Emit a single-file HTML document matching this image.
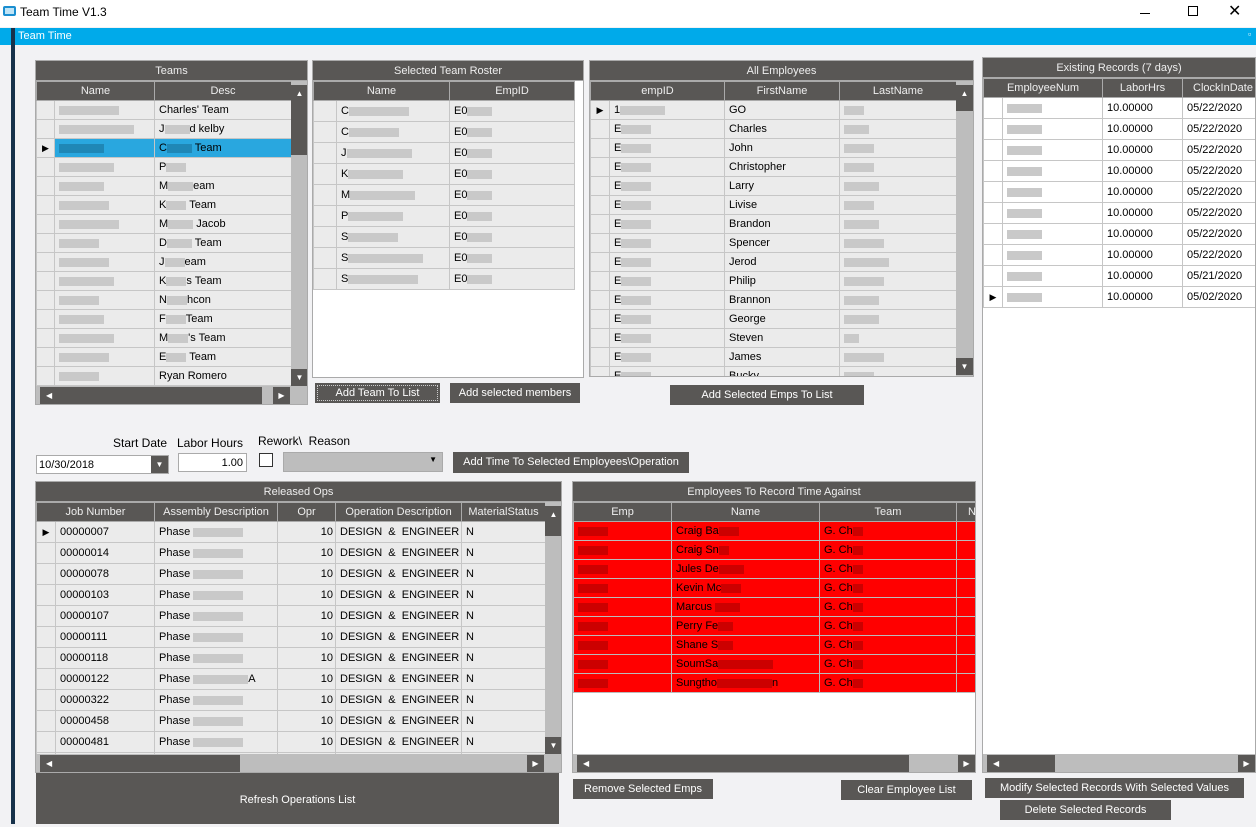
<!DOCTYPE html>
<html><head><meta charset="utf-8"><style>
*{box-sizing:border-box;margin:0;padding:0}
body{width:1256px;height:824px;overflow:hidden;background:#f2f2f4;font-family:"Liberation Sans",sans-serif;font-size:11px;color:#000;position:relative}
.a{position:absolute}
.tb{left:0;top:0;width:1256px;height:27px;background:#fff}
.blue{left:0;top:28px;width:1256px;height:17px;background:#00aaea;color:#fff;font-size:11px}
.panel{position:absolute;border:1px solid #aaa;background:#fff;overflow:hidden}
.ph{position:absolute;left:0;right:0;top:0;height:20px;background:#595755;color:#eee;text-align:center;line-height:20px;border-bottom:1px solid #aaa}
table{position:absolute;border-collapse:collapse;table-layout:fixed}
th{background:#595755;color:#eee;font-weight:normal;height:19px;border:1px solid #aaa;font-size:11px}
td{background:#ebebeb;border:1px solid #c6c6c6;white-space:nowrap;overflow:hidden;padding-left:4px;font-size:11px}
td.rh{padding:0;font-size:9px;text-align:center}
.w td{background:#fff}
.r td{background:#f00;border-color:#bbb}
.sel td{background:#29a7df}
i{display:inline-block;height:9px;background:#c9c9c9;vertical-align:middle}
.r i{background:#c00}
.vs{position:absolute;background:#bdbdbd}
.dk{position:absolute;background:#595755;color:#fff;text-align:center}
.btn{position:absolute;background:#595755;color:#fff;text-align:center;font-size:11px}
</style></head><body>
<div class="a tb"><div class="a" style="left:3px;top:6px;width:13px;height:10px;border:2px solid #1a8ed0;border-radius:2px;background:#bfe4f6"></div><div class="a" style="left:20px;top:5px;font-size:12px">Team Time V1.3</div>
<div class="a" style="left:1140px;top:13px;width:10px;height:1px;background:#000"></div>
<div class="a" style="left:1188px;top:6px;width:10px;height:10px;border:1px solid #000"></div>
<div class="a" style="left:1228px;top:1px;font-size:16px">✕</div></div>
<div class="a blue"><span class="a" style="left:18px;top:2px">Team Time</span><span class="a" style="left:1248px;top:1px;font-size:9px">▫</span></div>
<div class="a" style="left:11px;top:28px;width:4px;height:796px;background:#17324a"></div>

<!-- Teams -->
<div class="panel" style="left:35px;top:60px;width:273px;height:345px;background:#ebebeb">
<div class="ph">Teams</div>
<table style="left:0;top:20px;width:255px">
<colgroup><col style="width:18px"><col style="width:100px"><col style="width:137px"></colgroup>
<tr><th colspan="2">Name</th><th>Desc</th></tr>
<tr style="height:19px"><td class="rh"></td><td><i style="width:60px"></i></td><td>Charles' Team</td></tr>
<tr style="height:19px"><td class="rh"></td><td><i style="width:75px"></i></td><td>J<i style="width:25px"></i>d kelby</td></tr>
<tr class="sel" style="height:19px"><td class="rh" style="background:#ebebeb">▶</td><td><i style="width:45px;background:#1f87b6"></i></td><td>C<i style="width:25px;background:#1f87b6"></i> Team</td></tr>
<tr style="height:19px"><td class="rh"></td><td><i style="width:55px"></i></td><td>P<i style="width:20px"></i></td></tr>
<tr style="height:19px"><td class="rh"></td><td><i style="width:45px"></i></td><td>M<i style="width:25px"></i>eam</td></tr>
<tr style="height:19px"><td class="rh"></td><td><i style="width:50px"></i></td><td>K<i style="width:20px"></i> Team</td></tr>
<tr style="height:19px"><td class="rh"></td><td><i style="width:60px"></i></td><td>M<i style="width:25px"></i> Jacob</td></tr>
<tr style="height:19px"><td class="rh"></td><td><i style="width:40px"></i></td><td>D<i style="width:25px"></i> Team</td></tr>
<tr style="height:19px"><td class="rh"></td><td><i style="width:50px"></i></td><td>J<i style="width:20px"></i>eam</td></tr>
<tr style="height:19px"><td class="rh"></td><td><i style="width:55px"></i></td><td>K<i style="width:20px"></i>s Team</td></tr>
<tr style="height:19px"><td class="rh"></td><td><i style="width:40px"></i></td><td>N<i style="width:20px"></i>hcon</td></tr>
<tr style="height:19px"><td class="rh"></td><td><i style="width:45px"></i></td><td>F<i style="width:20px"></i>Team</td></tr>
<tr style="height:19px"><td class="rh"></td><td><i style="width:55px"></i></td><td>M<i style="width:20px"></i>'s Team</td></tr>
<tr style="height:19px"><td class="rh"></td><td><i style="width:50px"></i></td><td>E<i style="width:20px"></i> Team</td></tr>
<tr style="height:19px"><td class="rh"></td><td><i style="width:40px"></i></td><td>Ryan Romero</td></tr>
</table>
<div class="vs" style="left:255px;top:20px;width:17px;height:305px"></div>
<div class="dk" style="left:255px;top:24px;width:17px;height:70px;font-size:8px;line-height:18px">▲</div>
<div class="dk" style="left:255px;top:308px;width:17px;height:17px;font-size:8px;line-height:17px">▼</div>
<div class="vs" style="left:0;top:325px;width:272px;height:19px"></div>
<div class="dk" style="left:4px;top:326px;width:222px;height:17px;text-align:left;padding-left:6px;font-size:8px;line-height:17px">◀</div>
<div class="dk" style="left:237px;top:326px;width:17px;height:17px;font-size:8px;line-height:17px">▶</div>
</div>

<!-- Roster -->
<div class="panel" style="left:312px;top:60px;width:272px;height:318px">
<div class="ph">Selected Team Roster</div>
<table style="left:0;top:20px;width:261px">
<colgroup><col style="width:23px"><col style="width:113px"><col style="width:125px"></colgroup>
<tr><th colspan="2">Name</th><th>EmpID</th></tr>
<tr style="height:21px"><td class="rh"></td><td>C<i style="width:60px"></i></td><td>E0<i style="width:25px"></i></td></tr>
<tr style="height:21px"><td class="rh"></td><td>C<i style="width:50px"></i></td><td>E0<i style="width:25px"></i></td></tr>
<tr style="height:21px"><td class="rh"></td><td>J<i style="width:65px"></i></td><td>E0<i style="width:25px"></i></td></tr>
<tr style="height:21px"><td class="rh"></td><td>K<i style="width:55px"></i></td><td>E0<i style="width:25px"></i></td></tr>
<tr style="height:21px"><td class="rh"></td><td>M<i style="width:65px"></i></td><td>E0<i style="width:25px"></i></td></tr>
<tr style="height:21px"><td class="rh"></td><td>P<i style="width:55px"></i></td><td>E0<i style="width:25px"></i></td></tr>
<tr style="height:21px"><td class="rh"></td><td>S<i style="width:50px"></i></td><td>E0<i style="width:25px"></i></td></tr>
<tr style="height:21px"><td class="rh"></td><td>S<i style="width:75px"></i></td><td>E0<i style="width:25px"></i></td></tr>
<tr style="height:21px"><td class="rh"></td><td>S<i style="width:70px"></i></td><td>E0<i style="width:25px"></i></td></tr>
</table>
</div>

<!-- All Employees -->
<div class="panel" style="left:589px;top:60px;width:385px;height:317px;background:#ebebeb">
<div class="ph">All Employees</div>
<table style="left:0;top:20px;width:366px">
<colgroup><col style="width:19px"><col style="width:115px"><col style="width:115px"><col style="width:117px"></colgroup>
<tr><th colspan="2">empID</th><th>FirstName</th><th>LastName</th></tr>
<tr style="height:19px"><td class="rh">▶</td><td>1<i style="width:45px"></i></td><td>GO</td><td><i style="width:20px"></i></td></tr>
<tr style="height:19px"><td class="rh"></td><td>E<i style="width:30px"></i></td><td>Charles</td><td><i style="width:25px"></i></td></tr>
<tr style="height:19px"><td class="rh"></td><td>E<i style="width:30px"></i></td><td>John</td><td><i style="width:30px"></i></td></tr>
<tr style="height:19px"><td class="rh"></td><td>E<i style="width:30px"></i></td><td>Christopher</td><td><i style="width:30px"></i></td></tr>
<tr style="height:19px"><td class="rh"></td><td>E<i style="width:30px"></i></td><td>Larry</td><td><i style="width:35px"></i></td></tr>
<tr style="height:19px"><td class="rh"></td><td>E<i style="width:30px"></i></td><td>Livise</td><td><i style="width:30px"></i></td></tr>
<tr style="height:19px"><td class="rh"></td><td>E<i style="width:30px"></i></td><td>Brandon</td><td><i style="width:35px"></i></td></tr>
<tr style="height:19px"><td class="rh"></td><td>E<i style="width:30px"></i></td><td>Spencer</td><td><i style="width:40px"></i></td></tr>
<tr style="height:19px"><td class="rh"></td><td>E<i style="width:30px"></i></td><td>Jerod</td><td><i style="width:45px"></i></td></tr>
<tr style="height:19px"><td class="rh"></td><td>E<i style="width:30px"></i></td><td>Philip</td><td><i style="width:40px"></i></td></tr>
<tr style="height:19px"><td class="rh"></td><td>E<i style="width:30px"></i></td><td>Brannon</td><td><i style="width:35px"></i></td></tr>
<tr style="height:19px"><td class="rh"></td><td>E<i style="width:30px"></i></td><td>George</td><td><i style="width:35px"></i></td></tr>
<tr style="height:19px"><td class="rh"></td><td>E<i style="width:30px"></i></td><td>Steven</td><td><i style="width:15px"></i></td></tr>
<tr style="height:19px"><td class="rh"></td><td>E<i style="width:30px"></i></td><td>James</td><td><i style="width:40px"></i></td></tr>
<tr style="height:19px"><td class="rh"></td><td>E<i style="width:30px"></i></td><td>Bucky</td><td><i style="width:30px"></i></td></tr>
</table>
<div class="vs" style="left:366px;top:20px;width:17px;height:296px"></div>
<div class="dk" style="left:366px;top:24px;width:17px;height:26px;font-size:8px;line-height:18px">▲</div>
<div class="dk" style="left:366px;top:297px;width:17px;height:17px;font-size:8px;line-height:17px">▼</div>
</div>

<!-- Existing Records -->
<div class="panel" style="left:982px;top:57px;width:274px;height:716px">
<div class="ph">Existing Records (7 days)</div>
<table class="w" style="left:0;top:20px;width:280px">
<colgroup><col style="width:19px"><col style="width:100px"><col style="width:80px"><col style="width:81px"></colgroup>
<tr><th colspan="2">EmployeeNum</th><th>LaborHrs</th><th>ClockInDate</th></tr>
<tr style="height:21px"><td class="rh"></td><td><i style="width:35px"></i></td><td>10.00000</td><td>05/22/2020</td></tr>
<tr style="height:21px"><td class="rh"></td><td><i style="width:35px"></i></td><td>10.00000</td><td>05/22/2020</td></tr>
<tr style="height:21px"><td class="rh"></td><td><i style="width:35px"></i></td><td>10.00000</td><td>05/22/2020</td></tr>
<tr style="height:21px"><td class="rh"></td><td><i style="width:35px"></i></td><td>10.00000</td><td>05/22/2020</td></tr>
<tr style="height:21px"><td class="rh"></td><td><i style="width:35px"></i></td><td>10.00000</td><td>05/22/2020</td></tr>
<tr style="height:21px"><td class="rh"></td><td><i style="width:35px"></i></td><td>10.00000</td><td>05/22/2020</td></tr>
<tr style="height:21px"><td class="rh"></td><td><i style="width:35px"></i></td><td>10.00000</td><td>05/22/2020</td></tr>
<tr style="height:21px"><td class="rh"></td><td><i style="width:35px"></i></td><td>10.00000</td><td>05/22/2020</td></tr>
<tr style="height:21px"><td class="rh"></td><td><i style="width:35px"></i></td><td>10.00000</td><td>05/21/2020</td></tr>
<tr style="height:21px"><td class="rh">▶</td><td><i style="width:35px"></i></td><td>10.00000</td><td>05/02/2020</td></tr>
</table>
<div class="vs" style="left:0;top:696px;width:274px;height:19px"></div>
<div class="dk" style="left:4px;top:697px;width:68px;height:17px;text-align:left;padding-left:6px;font-size:8px;line-height:17px">◀</div>
<div class="dk" style="left:255px;top:697px;width:17px;height:17px;font-size:8px;line-height:17px">▶</div>
</div>

<div class="btn" style="left:315px;top:383px;width:125px;height:20px;line-height:20px;outline:1px dotted #ccc;outline-offset:-3px">Add Team To List</div>
<div class="btn" style="left:450px;top:383px;width:130px;height:20px;line-height:20px">Add selected members</div>
<div class="btn" style="left:670px;top:385px;width:194px;height:20px;line-height:20px">Add Selected Emps To List</div>

<div class="a" style="left:113px;top:436px;font-size:12px">Start Date</div>
<div class="a" style="left:177px;top:436px;font-size:12px">Labor Hours</div>
<div class="a" style="left:258px;top:434px;font-size:12px">Rework\ &nbsp;Reason</div>
<div class="a" style="left:36px;top:455px;width:133px;height:19px;background:#fff;border:1px solid #aaa;padding:3px 2px;font-size:11px">10/30/2018</div>
<div class="dk" style="left:151px;top:456px;width:17px;height:17px;font-size:8px;line-height:17px">▼</div>
<div class="a" style="left:178px;top:453px;width:69px;height:19px;background:#fff;border:1px solid #aaa;text-align:right;padding:3px 3px;font-size:11px">1.00</div>
<div class="a" style="left:259px;top:453px;width:14px;height:14px;border:1px solid #333;background:#fff"></div>
<div class="a" style="left:283px;top:452px;width:160px;height:20px;background:#bdbdbd;border:1px solid #aaa;text-align:right;padding:2px 5px;font-size:8px">▼</div>
<div class="btn" style="left:453px;top:452px;width:236px;height:21px;line-height:21px">Add Time To Selected Employees\Operation</div>

<!-- Released Ops -->
<div class="panel" style="left:35px;top:481px;width:527px;height:292px;background:#ebebeb">
<div class="ph">Released Ops</div>
<table style="left:0;top:20px;width:509px">
<colgroup><col style="width:19px"><col style="width:99px"><col style="width:123px"><col style="width:58px"><col style="width:126px"><col style="width:84px"></colgroup>
<tr><th colspan="2">Job Number</th><th>Assembly Description</th><th>Opr</th><th>Operation Description</th><th>MaterialStatus</th></tr>
<tr style="height:21px"><td class="rh">▶</td><td>00000007</td><td>Phase <i style="width:50px"></i></td><td style="text-align:right;padding-right:2px">10</td><td>DESIGN &nbsp;&amp; &nbsp;ENGINEER</td><td>N</td></tr>
<tr style="height:21px"><td class="rh"></td><td>00000014</td><td>Phase <i style="width:50px"></i></td><td style="text-align:right;padding-right:2px">10</td><td>DESIGN &nbsp;&amp; &nbsp;ENGINEER</td><td>N</td></tr>
<tr style="height:21px"><td class="rh"></td><td>00000078</td><td>Phase <i style="width:50px"></i></td><td style="text-align:right;padding-right:2px">10</td><td>DESIGN &nbsp;&amp; &nbsp;ENGINEER</td><td>N</td></tr>
<tr style="height:21px"><td class="rh"></td><td>00000103</td><td>Phase <i style="width:50px"></i></td><td style="text-align:right;padding-right:2px">10</td><td>DESIGN &nbsp;&amp; &nbsp;ENGINEER</td><td>N</td></tr>
<tr style="height:21px"><td class="rh"></td><td>00000107</td><td>Phase <i style="width:50px"></i></td><td style="text-align:right;padding-right:2px">10</td><td>DESIGN &nbsp;&amp; &nbsp;ENGINEER</td><td>N</td></tr>
<tr style="height:21px"><td class="rh"></td><td>00000111</td><td>Phase <i style="width:50px"></i></td><td style="text-align:right;padding-right:2px">10</td><td>DESIGN &nbsp;&amp; &nbsp;ENGINEER</td><td>N</td></tr>
<tr style="height:21px"><td class="rh"></td><td>00000118</td><td>Phase <i style="width:50px"></i></td><td style="text-align:right;padding-right:2px">10</td><td>DESIGN &nbsp;&amp; &nbsp;ENGINEER</td><td>N</td></tr>
<tr style="height:21px"><td class="rh"></td><td>00000122</td><td>Phase <i style="width:55px"></i>A</td><td style="text-align:right;padding-right:2px">10</td><td>DESIGN &nbsp;&amp; &nbsp;ENGINEER</td><td>N</td></tr>
<tr style="height:21px"><td class="rh"></td><td>00000322</td><td>Phase <i style="width:50px"></i></td><td style="text-align:right;padding-right:2px">10</td><td>DESIGN &nbsp;&amp; &nbsp;ENGINEER</td><td>N</td></tr>
<tr style="height:21px"><td class="rh"></td><td>00000458</td><td>Phase <i style="width:50px"></i></td><td style="text-align:right;padding-right:2px">10</td><td>DESIGN &nbsp;&amp; &nbsp;ENGINEER</td><td>N</td></tr>
<tr style="height:21px"><td class="rh"></td><td>00000481</td><td>Phase <i style="width:50px"></i></td><td style="text-align:right;padding-right:2px">10</td><td>DESIGN &nbsp;&amp; &nbsp;ENGINEER</td><td>N</td></tr>
<tr style="height:21px"><td class="rh"></td><td></td><td></td><td></td><td></td><td></td></tr>
</table>
<div class="vs" style="left:509px;top:20px;width:17px;height:252px"></div>
<div class="dk" style="left:509px;top:24px;width:17px;height:30px;font-size:8px;line-height:18px">▲</div>
<div class="dk" style="left:509px;top:255px;width:17px;height:17px;font-size:8px;line-height:17px">▼</div>
<div class="vs" style="left:0;top:272px;width:527px;height:19px"></div>
<div class="dk" style="left:4px;top:273px;width:200px;height:17px;text-align:left;padding-left:6px;font-size:8px;line-height:17px">◀</div>
<div class="dk" style="left:491px;top:273px;width:17px;height:17px;font-size:8px;line-height:17px">▶</div>
</div>
<div class="btn" style="left:36px;top:773px;width:523px;height:51px;line-height:54px">Refresh Operations List</div>

<!-- Employees To Record -->
<div class="panel" style="left:572px;top:481px;width:404px;height:292px">
<div class="ph">Employees To Record Time Against</div>
<table class="r" style="left:0;top:20px;width:420px">
<colgroup><col style="width:98px"><col style="width:148px"><col style="width:137px"><col style="width:37px"></colgroup>
<tr><th>Emp</th><th>Name</th><th>Team</th><th>No</th></tr>
<tr style="height:19px"><td><i style="width:30px"></i></td><td>Craig Ba<i style="width:20px"></i></td><td>G. Ch<i style="width:10px"></i></td><td></td></tr>
<tr style="height:19px"><td><i style="width:30px"></i></td><td>Craig Sn<i style="width:10px"></i></td><td>G. Ch<i style="width:10px"></i></td><td></td></tr>
<tr style="height:19px"><td><i style="width:30px"></i></td><td>Jules De<i style="width:25px"></i></td><td>G. Ch<i style="width:10px"></i></td><td></td></tr>
<tr style="height:19px"><td><i style="width:30px"></i></td><td>Kevin Mc<i style="width:20px"></i></td><td>G. Ch<i style="width:10px"></i></td><td></td></tr>
<tr style="height:19px"><td><i style="width:30px"></i></td><td>Marcus <i style="width:25px"></i></td><td>G. Ch<i style="width:10px"></i></td><td></td></tr>
<tr style="height:19px"><td><i style="width:30px"></i></td><td>Perry Fe<i style="width:15px"></i></td><td>G. Ch<i style="width:10px"></i></td><td></td></tr>
<tr style="height:19px"><td><i style="width:30px"></i></td><td>Shane S<i style="width:15px"></i></td><td>G. Ch<i style="width:10px"></i></td><td></td></tr>
<tr style="height:19px"><td><i style="width:30px"></i></td><td>SoumSa<i style="width:55px"></i></td><td>G. Ch<i style="width:10px"></i></td><td></td></tr>
<tr style="height:19px"><td><i style="width:30px"></i></td><td>Sungtho<i style="width:55px"></i>n</td><td>G. Ch<i style="width:10px"></i></td><td></td></tr>
</table>
<div class="vs" style="left:0;top:272px;width:404px;height:19px"></div>
<div class="dk" style="left:4px;top:273px;width:332px;height:17px;text-align:left;padding-left:6px;font-size:8px;line-height:17px">◀</div>
<div class="dk" style="left:385px;top:273px;width:17px;height:17px;font-size:8px;line-height:17px">▶</div>
</div>

<div class="btn" style="left:573px;top:779px;width:140px;height:20px;line-height:20px">Remove Selected Emps</div>
<div class="btn" style="left:841px;top:780px;width:131px;height:20px;line-height:20px">Clear Employee List</div>
<div class="btn" style="left:985px;top:778px;width:259px;height:20px;line-height:20px">Modify Selected Records With Selected Values</div>
<div class="btn" style="left:1000px;top:800px;width:171px;height:20px;line-height:20px">Delete Selected Records</div>
</body></html>
